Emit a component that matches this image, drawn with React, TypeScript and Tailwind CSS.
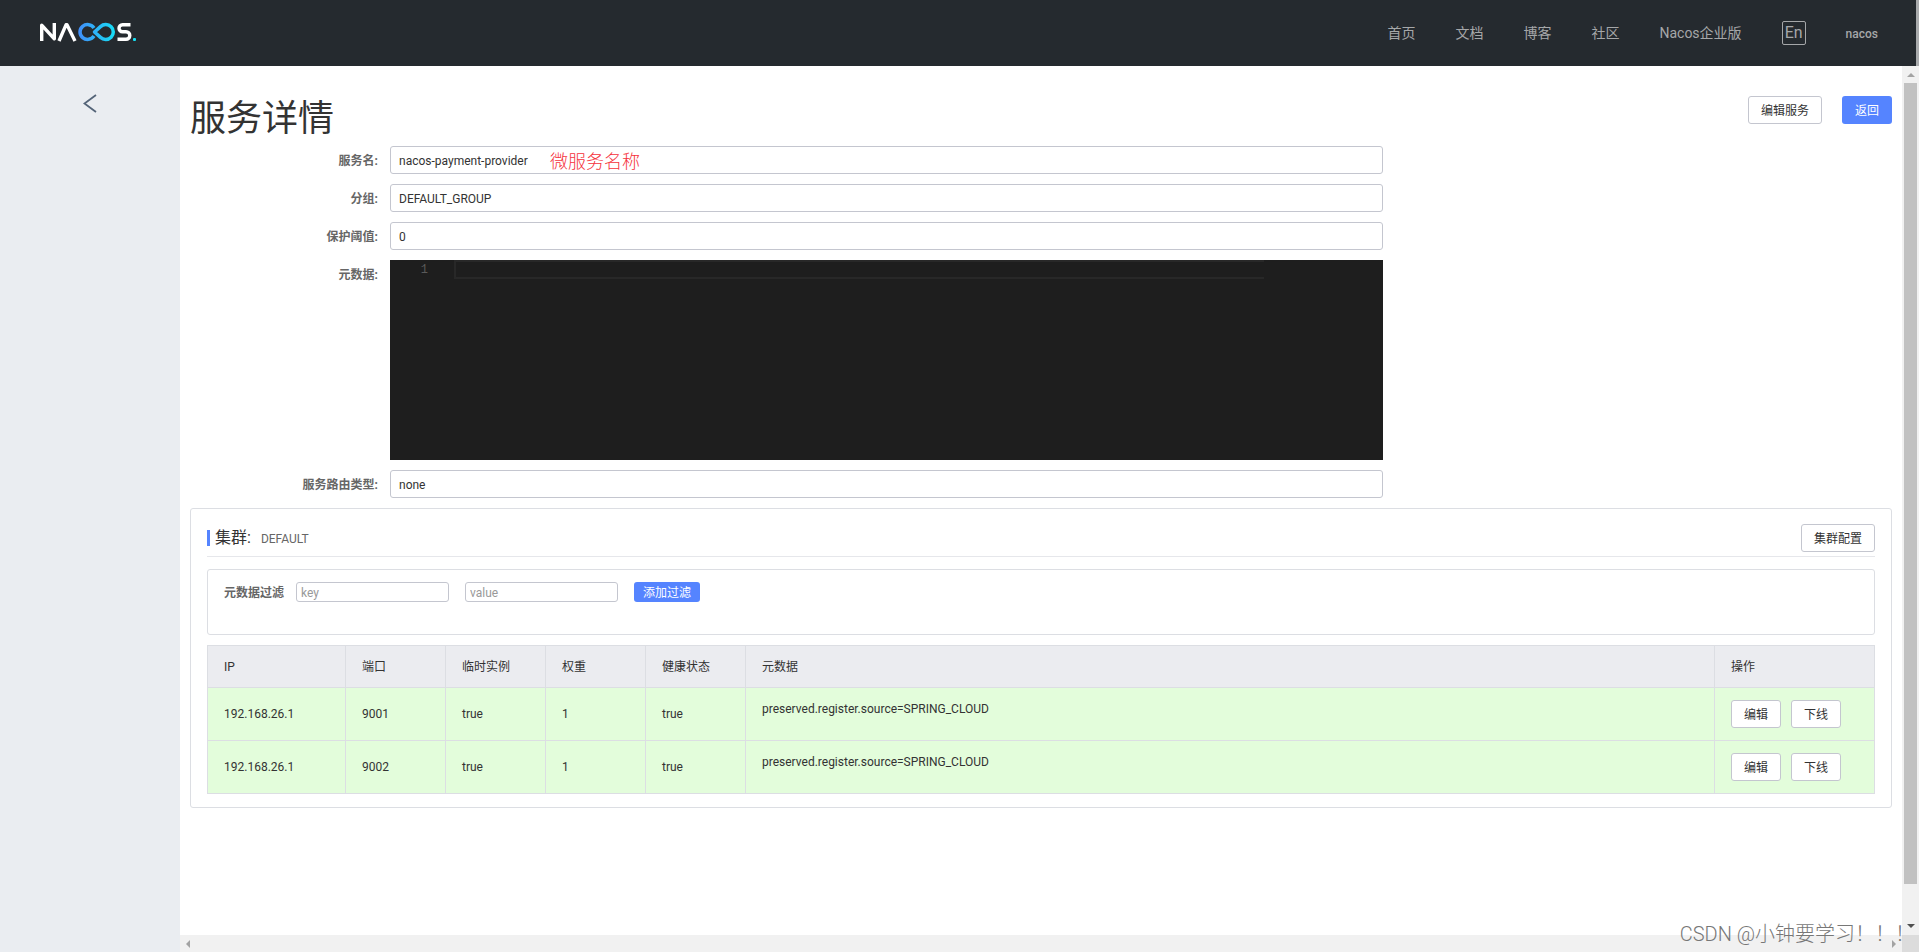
import type { ReactNode } from "react";

type Instance = { ip: string; port: number; ephemeral: boolean; weight: number; healthy: boolean; metadata: string };

const instances: Instance[] = [
  { ip: "192.168.26.1", port: 9001, ephemeral: true, weight: 1, healthy: true, metadata: "preserved.register.source=SPRING_CLOUD" },
  { ip: "192.168.26.1", port: 9002, ephemeral: true, weight: 1, healthy: true, metadata: "preserved.register.source=SPRING_CLOUD" },
];

const navLinks = ["首页", "文档", "博客", "社区", "Nacos企业版"];

function Logo() {
  return (
    <svg viewBox="0 0 96 20" className="h-5 w-24" fill="none" aria-label="NACOS" role="img">
      <defs>
        <linearGradient id="loop" x1="36" y1="0" x2="76" y2="0" gradientUnits="userSpaceOnUse">
          <stop offset="0" stopColor="#4489fa" />
          <stop offset="1" stopColor="#15e0f5" />
        </linearGradient>
      </defs>
      <g stroke="#fff" strokeWidth="3.4" strokeLinejoin="round">
        <path d="M1.7 19V3.2L14.3 16.8V1" />
        <path d="M19 19L26 2.8h1L35 19" />
        <path d="M90.5 2.7H82.5a3.5 3.5 0 0 0 0 7h3.5a3.800 3.800 0 0 1 0 7.600H77.500" />
      </g>
      <path d="M54 6A7.600 7.400 0 1 0 54 14" stroke="url(#loop)" strokeWidth="3.500" />
      <path
        d="M54.500 10L60.500 4.600a7.600 7.400 0 1 1 0 10.800Z"
        stroke="url(#loop)"
        strokeWidth="3.500"
        strokeLinejoin="round"
      />
      <rect x="93" y="16" width="3" height="3" rx="1" fill="#15e0f5" />
    </svg>
  );
}

function Button({ children }: { children: ReactNode }) {
  return (
    <button type="button" className="h-7 rounded-[3px] border border-[#c4c6cf] bg-white px-3 pt-0.5 text-xs text-[#333]">
      {children}
    </button>
  );
}

function Field({ id, label, children }: { id: string; label: string; children: ReactNode }) {
  return (
    <div className="flex">
      <label htmlFor={id} className="h-7 w-[200px] shrink-0 pr-3 text-right text-xs leading-[30px] font-bold text-[#666]">
        {label}:
      </label>
      <div className="relative w-7/12">{children}</div>
    </div>
  );
}

function TextField({ id, value }: { id: string; value: string }) {
  return (
    <input
      id={id}
      readOnly
      value={value}
      className="block h-7 w-full rounded-[3px] border border-[#c4c6cf] bg-white px-2 pt-0.5 text-xs text-[#333] outline-none"
    />
  );
}

function FilterInput({ label }: { label: string }) {
  return (
    <input
      aria-label={label}
      placeholder={label}
      className="h-5 w-[153px] rounded-[3px] border border-[#c4c6cf] px-1 pt-0.5 text-xs outline-none placeholder:text-[#999]"
    />
  );
}

function Header() {
  return (
    <header className="flex h-[66px] shrink-0 bg-[#252a2f]">
      <div className="flex flex-1 items-center justify-between pr-[38px] pl-10">
        <a href="#home" className="pb-0.5">
          <Logo />
        </a>
        <nav className="flex items-center gap-10 text-sm text-[#a5a7a9]">
          {navLinks.map((text) => (
            <a key={text} href="#nav">
              {text}
            </a>
          ))}
          <button type="button" className="h-6 w-6 rounded-[2px] border border-[#a5a7a9] text-base leading-5">
            En
          </button>
          <a href="#user" className="pt-0.5 text-xs font-medium">
            nacos
          </a>
        </nav>
      </div>
      <div className="w-[3px] bg-[#a9abad]" />
    </header>
  );
}

function Arrow({ className }: { className: string }) {
  return (
    <svg viewBox="0 0 8 4" className={className} fill="currentColor">
      <path d="M0 4L4 0L8 4Z" />
    </svg>
  );
}

function ClusterCard() {
  return (
    <section className="mt-2.5 rounded-[3px] border border-[#dcdee3] px-4 pt-[15px] pb-[13px]">
      <div className="flex h-[33px] items-start justify-between border-b border-[#e6e7eb]">
        <h2 className="flex items-center pt-0.5">
          <span className="mr-[5px] h-4 w-[3px] bg-[#5584ff]" />
          <span className="text-base text-[#333]">集群:</span>
          <span className="ml-2.5 pt-0.5 text-xs text-[#666]">DEFAULT</span>
        </h2>
        <Button>集群配置</Button>
      </div>
      <div className="mt-3 flex h-[66px] items-start rounded-[3px] border border-[#dcdee3] px-4 pt-3">
        <span className="pt-px text-xs leading-5 font-bold text-[#666]">元数据过滤</span>
        <div className="ml-3 flex gap-4">
          <FilterInput label="key" />
          <FilterInput label="value" />
          <button type="button" className="h-5 rounded-[3px] bg-[#5584ff] px-[9px] pt-0.5 text-xs text-white">
            添加过滤
          </button>
        </div>
      </div>
      <table className="mt-2.5 w-full table-fixed border-collapse text-left text-xs text-[#333] [&_td]:border [&_td]:border-[#dcdee3] [&_td]:px-4 [&_th]:border [&_th]:border-[#dcdee3] [&_th]:px-4 [&_th]:font-normal">
        <colgroup>
          <col className="w-[138px]" />
          <col className="w-[100px]" />
          <col className="w-[100px]" />
          <col className="w-[100px]" />
          <col className="w-[100px]" />
          <col />
          <col className="w-[160px]" />
        </colgroup>
        <thead>
          <tr className="h-[42px] bg-[#ebecf0]">
            <th>IP</th>
            <th>端口</th>
            <th>临时实例</th>
            <th>权重</th>
            <th>健康状态</th>
            <th>元数据</th>
            <th>操作</th>
          </tr>
        </thead>
        <tbody>
          {instances.map((row) => (
            <tr key={row.port} className="h-[53px] bg-[#e3fddb]">
              <td>{row.ip}</td>
              <td>{row.port}</td>
              <td>{String(row.ephemeral)}</td>
              <td>{row.weight}</td>
              <td>{String(row.healthy)}</td>
              <td className="pt-3 align-top leading-[18px]">{row.metadata}</td>
              <td>
                <div className="flex gap-2.5">
                  <Button>编辑</Button>
                  <Button>下线</Button>
                </div>
              </td>
            </tr>
          ))}
        </tbody>
      </table>
    </section>
  );
}

export default function App() {
  return (
    <div className="relative flex h-screen flex-col overflow-hidden bg-white font-[Roboto,'Noto_Sans_CJK_SC',sans-serif]">
      <Header />
      <div className="flex min-h-0 flex-1">
        <aside className="w-[180px] shrink-0 bg-[#eaedf1]">
          <button type="button" aria-label="收起" className="mx-auto mt-7 block">
            <svg viewBox="0 0 14 20" className="h-5 w-3.5" fill="none" stroke="#546478" strokeWidth="1.8">
              <path d="M13 1L1.5 9.5L13 18" />
            </svg>
          </button>
        </aside>
        <div className="flex min-w-0 flex-1 flex-col">
          <main className="min-h-0 flex-1 overflow-hidden px-2.5">
            <div className="flex h-20 items-start justify-between">
              <h1 className="pt-[26px] text-4xl leading-[54px] font-normal text-[#333]">服务详情</h1>
              <div className="flex gap-5 pt-[30px]">
                <Button>编辑服务</Button>
                <button type="button" className="h-7 rounded-[3px] bg-[#5584ff] px-[13px] pt-0.5 text-xs text-white">
                  返回
                </button>
              </div>
            </div>
            <form className="flex flex-col gap-2.5">
              <Field id="name" label="服务名">
                <TextField id="name" value="nacos-payment-provider" />
                <span className="absolute top-0.5 left-40 text-lg leading-7 font-light text-[#f5323c]">微服务名称</span>
              </Field>
              <Field id="group" label="分组">
                <TextField id="group" value="DEFAULT_GROUP" />
              </Field>
              <Field id="threshold" label="保护阈值">
                <TextField id="threshold" value="0" />
              </Field>
              <Field id="metadata" label="元数据">
                <div className="flex h-[200px] bg-[#1e1e1e] font-[Liberation_Mono,monospace] text-xs">
                  <span className="w-[38px] text-right leading-5 text-[#5a5a5a]">1</span>
                  <textarea
                    id="metadata"
                    readOnly
                    rows={1}
                    className="ml-[26px] block h-[19px] w-[810px] resize-none border-2 border-r-0 border-[#282828] text-white outline-none"
                  />
                </div>
              </Field>
              <Field id="selector" label="服务路由类型">
                <TextField id="selector" value="none" />
              </Field>
            </form>
            <ClusterCard />
          </main>
          <div className="flex h-[17px] shrink-0 items-center justify-between bg-[#f1f1f1] px-1 text-[#a3a3a3]">
            <Arrow className="h-1 w-2 -rotate-90" />
            <Arrow className="h-1 w-2 rotate-90" />
          </div>
        </div>
        <div className="flex w-[17px] shrink-0 flex-col items-center bg-[#f1f1f1]">
          <Arrow className="mt-[7px] mb-1.5 h-1 w-2 text-[#a3a3a3]" />
          <div className="w-[13px] flex-1 bg-[#c1c1c1]" />
          <Arrow className="mt-10 mb-[7px] h-1 w-2 rotate-180 text-[#505050]" />
          <div className="h-[17px] w-full bg-[#dcdcdc]" />
        </div>
      </div>
      <div className="absolute right-1 bottom-0.5 text-xl leading-8 font-light whitespace-nowrap text-[#777]">
        CSDN @小钟要学习！！！
      </div>
    </div>
  );
}
